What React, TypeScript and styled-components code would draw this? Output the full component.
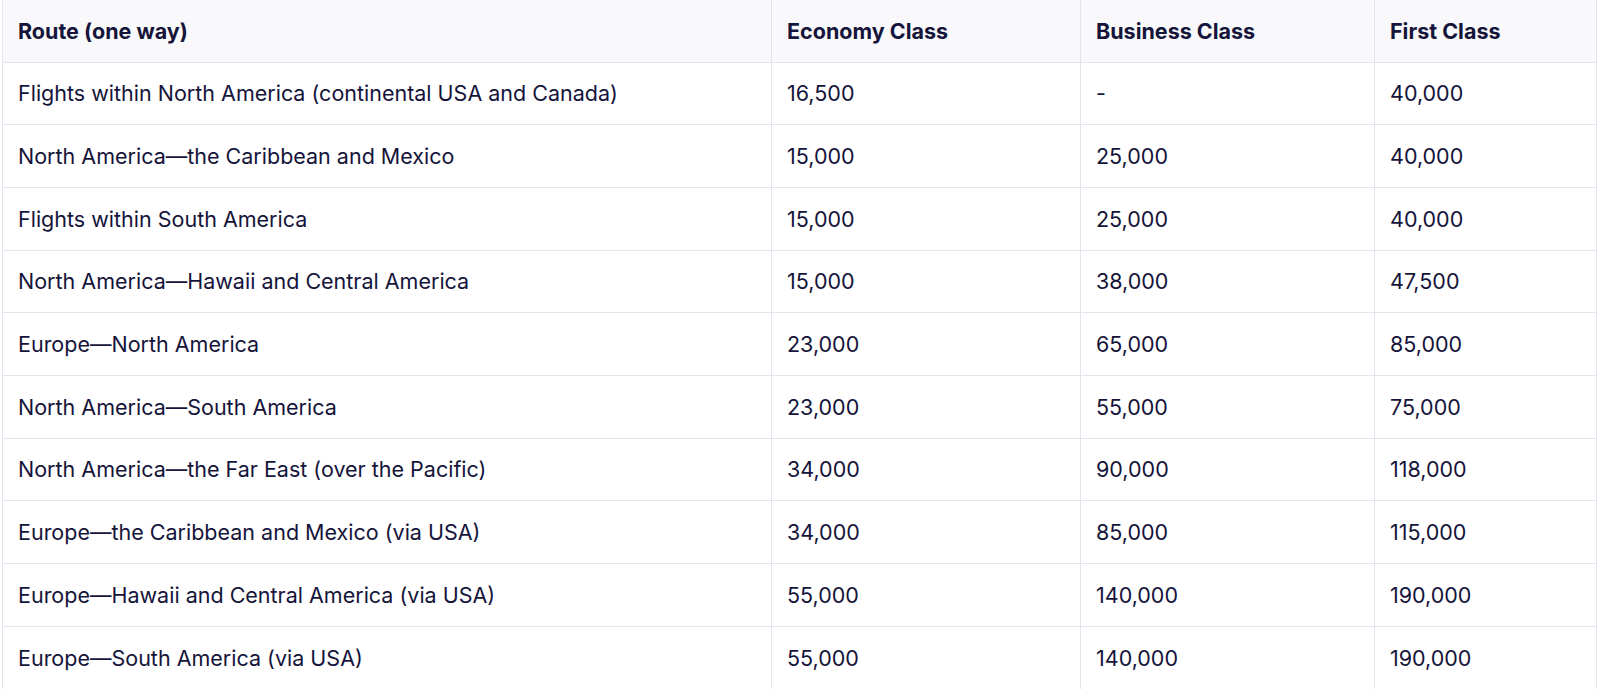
import React from "react";
import styled, { createGlobalStyle } from "styled-components";

const Global = createGlobalStyle`
  html, body { margin: 0; padding: 0; background: #ffffff; }
  body { font-family: "Inter", "Noto Sans", sans-serif; color: #15143a; }
`;

const Wrap = styled.div`
  padding: 0 4px 0 2px;
`;

const Table = styled.table`
  width: 1594px;
  border-collapse: collapse;
  table-layout: fixed;
  border-left: 1px solid #e4e4ee;
  border-right: 1px solid #e4e4ee;
`;

const HeadRow = styled.tr`
  background: #f9f9fb;
  height: 62px;
`;

const Row = styled.tr`
  height: 62.7px;
  border-top: 1px solid #e4e4ee;
`;

const Th = styled.th<{ $w: number }>`
  box-sizing: border-box;
  width: ${(p) => p.$w}px;
  text-align: left;
  padding: 0 15px;
  font-size: 21.5px;
  font-weight: 700;
  color: #15143a;
  border-left: 1px solid #e4e4ee;
  &:first-child { border-left: none; }
`;

const Td = styled.td`
  box-sizing: border-box;
  padding: 0 15px;
  font-size: 21.5px;
  font-weight: 400;
  color: #15143a;
  border-left: 1px solid #e4e4ee;
  &:first-child { border-left: none; }
`;

const cols = [
  { label: "Route (one way)", w: 769 },
  { label: "Economy Class", w: 309 },
  { label: "Business Class", w: 294 },
  { label: "First Class", w: 222 },
];

const rows: [string, string, string, string][] = [
  ["Flights within North America (continental USA and Canada)", "16,500", "-", "40,000"],
  ["North America\u2014the Caribbean and Mexico", "15,000", "25,000", "40,000"],
  ["Flights within South America", "15,000", "25,000", "40,000"],
  ["North America\u2014Hawaii and Central America", "15,000", "38,000", "47,500"],
  ["Europe\u2014North America", "23,000", "65,000", "85,000"],
  ["North America\u2014South America", "23,000", "55,000", "75,000"],
  ["North America\u2014the Far East (over the Pacific)", "34,000", "90,000", "118,000"],
  ["Europe\u2014the Caribbean and Mexico (via USA)", "34,000", "85,000", "115,000"],
  ["Europe\u2014Hawaii and Central America (via USA)", "55,000", "140,000", "190,000"],
  ["Europe\u2014South America (via USA)", "55,000", "140,000", "190,000"],
];

export default function App() {
  return (
    <>
      <Global />
      <Wrap>
        <Table>
          <thead>
            <HeadRow>
              {cols.map((c) => (
                <Th key={c.label} $w={c.w}>{c.label}</Th>
              ))}
            </HeadRow>
          </thead>
          <tbody>
            {rows.map((r, i) => (
              <Row key={i}>
                {r.map((cell, j) => (
                  <Td key={j}>{cell}</Td>
                ))}
              </Row>
            ))}
          </tbody>
        </Table>
      </Wrap>
    </>
  );
}
